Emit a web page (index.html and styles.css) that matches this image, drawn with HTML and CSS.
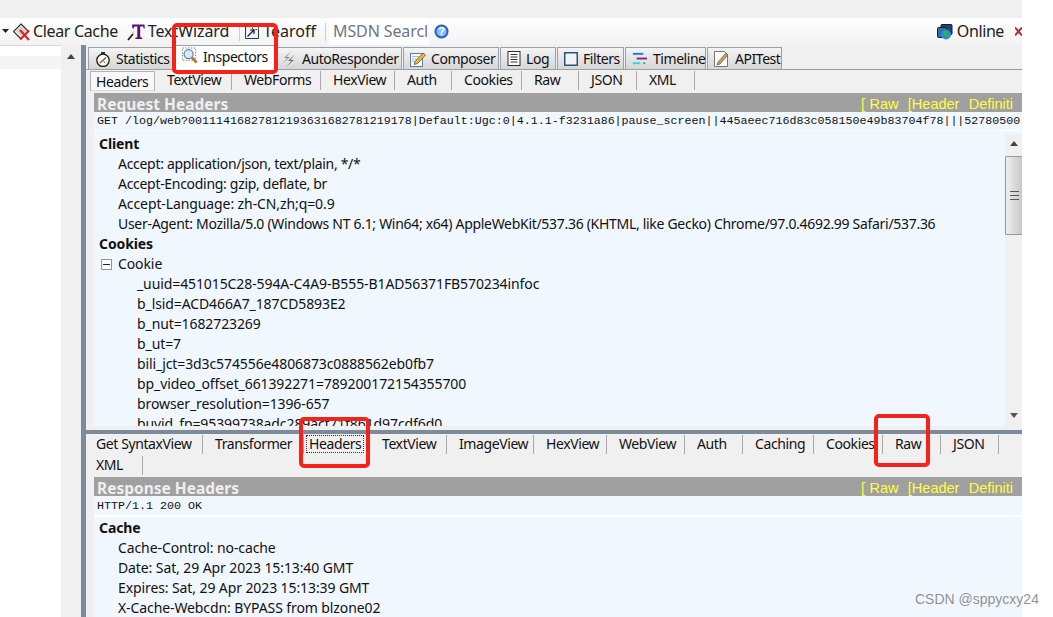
FILE: index.html
```html
<!DOCTYPE html>
<html lang="en">
<head>
<meta charset="utf-8">
<title>Fiddler Inspectors</title>
<link rel="stylesheet" href="styles.css">
</head>
<body>
<div class="app">
  <div class="titlegap"></div>
  <div class="toolbar">
    <svg class="caret" width="8" height="5" viewBox="0 0 8 5"><path d="M0 0h7L3.500 4z" fill="#222"/></svg>
    <span class="tool tool-clear">
      <svg width="18" height="18" viewBox="0 0 18 18"><path d="M8 1l7.500 7.500L8 16 .5 8.500z" fill="#f4f4f4" stroke="#2b2b2b" stroke-width="1.200"/><path d="M8 3l5 5-5 5-5-5z" fill="#cfcfcf"/><path d="M7 7l9 10M16 7.500L7 16.500" stroke="#e0201c" stroke-width="2"/></svg>
      Clear Cache
    </span>
    <span class="tool tool-wizard">
      <svg width="18" height="18" viewBox="0 0 18 18"><path d="M1 17l5-6" stroke="#111" stroke-width="1.600"/><path d="M5.500 10.500l1.500-2" stroke="#e7d23a" stroke-width="1.600"/><path d="M5 1.500h12.500l.3 4h-1L16 3.500h-2.800v10.700l2 .6v1.200H8.300v-1.200l2-.6V3.500H7.500l-1 2h-1z" fill="#5e0f78"/></svg>
      TextWizard
    </span>
    <span class="sep"></span>
    <span class="tool tool-tearoff">
      <svg width="14" height="15" viewBox="0 0 14 15"><path d="M.5 2.500h13v12H.5z" fill="#eef2f7" stroke="#24384f"/><path d="M7.500 .5h6v5h-6z" fill="#fff" stroke="#24384f" stroke-dasharray="1.500 1"/><path d="M2.500 12.500l6-6M5 6h4v4" stroke="#10233a" stroke-width="1.200" fill="none"/></svg>
      Tearoff
    </span>
    <span class="sep sep-msdn"></span>
    <span class="msdn">MSDN Searcl</span>
    <svg class="help" width="15" height="15" viewBox="0 0 15 15"><circle cx="7.500" cy="7.500" r="7" fill="#2660c8"/><circle cx="7.500" cy="7.500" r="5" fill="#8dbcf2"/><text x="7.500" y="11" text-anchor="middle" class="help-q">?</text></svg>
    <span class="grow"></span>
    <span class="tool tool-online">
      <svg width="16" height="16" viewBox="0 0 16 16"><rect x="4" y="0.500" width="11" height="10" rx="1" fill="#1e4570" stroke="#0d1f33"/><rect x="0.500" y="3.500" width="9" height="10" rx="1" fill="#3a6d9e" stroke="#0d1f33"/><circle cx="9" cy="10.500" r="5" fill="#1f8de0"/><path d="M6 8.500l3-2.500 2 2.500-2 5-1.500-2z" fill="#39b23a"/><path d="M11 10.500l2 1-1 2.500z" fill="#39b23a"/></svg>
      Online
    </span>
    <svg class="close" width="7" height="9" viewBox="0 0 7 9"><path d="M0 0.500l7 8M7 0.500l-7 8" stroke="#a33" stroke-width="2"/></svg>
  </div>
  <div class="workspace">
    <aside class="sessions">
      <div class="sessions-head"></div>
    </aside>
    <div class="sess-scroll"><span class="arrow-up"></span></div>
    <div class="vsplit"></div>
    <main class="detail">
      <nav class="maintabs">
        <div class="mtab">
          <svg width="16" height="16" viewBox="0 0 16 16"><path d="M6 1h4v2H6z" fill="#333"/><circle cx="8" cy="9.300" r="6.200" fill="#fffdf0" stroke="#1c1c1c" stroke-width="1.300"/><path d="M8 9.300l3-3" stroke="#1a4fb0" stroke-width="1.200"/><path d="M8 9.300L4.800 12" stroke="#d9302a" stroke-width="1.200"/><path d="M8 9.300l2.500 3" stroke="#28a84a"/></svg>
          Statistics
        </div>
        <div class="mtab mtab-active">
          <svg width="16" height="18" viewBox="0 0 17 18"><rect x=".5" y=".5" width="14" height="13" fill="none" stroke="#6b7a90" stroke-dasharray="1.500 1.500"/><circle cx="7" cy="7" r="4.800" fill="#d6e8fa" stroke="#6f8296" stroke-width="1.300"/><path d="M10.500 10.500l5 5.500" stroke="#b87a2c" stroke-width="3"/></svg>
          Inspectors
        </div>
        <div class="mtab mtab-auto">
          <svg width="16" height="16" viewBox="0 0 16 16"><path d="M10 0L3 7h3.500L1 13l8-7H5.500z" fill="#8f8f8f"/><path d="M14 3L7 10h3.500L5 16l8-7H9.500z" fill="#6f6f6f"/></svg>
          AutoResponder
        </div>
        <div class="mtab">
          <svg width="16" height="16" viewBox="0 0 16 16"><rect x=".5" y="2.500" width="12" height="13" fill="#f4f9ff" stroke="#5b7ea6"/><path d="M2 5.500h7M2 8h5M2 10.500h3" stroke="#a9bcd2"/><path d="M5 10.500L13 2l2.500 2-8 8.500-3.200 1z" fill="#eab83a" stroke="#6a4f18" stroke-width=".8"/></svg>
          Composer
        </div>
        <div class="mtab">
          <svg width="14" height="15" viewBox="0 0 13 15"><rect x=".5" y=".5" width="12" height="14" fill="#fff" stroke="#2a2a2a"/><path d="M3 3.500h7M3 6h7M3 8.500h7M3 11h7" stroke="#333"/></svg>
          Log
        </div>
        <div class="mtab">
          <svg width="14" height="14" viewBox="0 0 14 14"><rect x=".75" y=".75" width="12.500" height="12.500" fill="#f2f4f4" stroke="#23547f" stroke-width="1.500"/></svg>
          Filters
        </div>
        <div class="mtab">
          <svg width="16" height="14" viewBox="0 0 17 14"><path d="M1 1.500h11" stroke="#1a7ae0" stroke-width="2"/><path d="M5 6.500h11" stroke="#8a1a9a" stroke-width="2"/><path d="M1 11.500h8" stroke="#10e0e8" stroke-width="2"/><path d="M12 11.500h2" stroke="#2bb52b" stroke-width="2"/></svg>
          Timeline
        </div>
        <div class="mtab">
          <svg width="16" height="17" viewBox="0 0 16 17"><path d="M.5 1.500h10l3 3v12H.5z" fill="#fff" stroke="#777"/><path d="M4 12l8-9 2 2-8 9-3 1z" fill="#c9a14a" stroke="#555" stroke-width=".7"/></svg>
          APITest
        </div>
      </nav>

      <section class="pane pane-request">
        <div class="subtabs subtabs-req">
          <div class="stab stab-selected">Headers</div>
          <div class="stab">TextView</div>
          <div class="stab">WebForms</div>
          <div class="stab">HexView</div>
          <div class="stab">Auth</div>
          <div class="stab">Cookies</div>
          <div class="stab">Raw</div>
          <div class="stab">JSON</div>
          <div class="stab">XML</div>
        </div>
        <div class="sectionbar">
          <span class="sectiontitle">Request Headers</span>
          <span class="sectionlinks">[ Raw&nbsp; [Header&nbsp; Definiti</span>
        </div>
        <div class="startline">GET /log/web?00111416827812193631682781219178|Default:Ugc:0|4.1.1-f3231a86|pause_screen||445aeec716d83c058150e49b83704f78|||52780500</div>
        <div class="treewrap">
          <div class="tree">
            <div class="group">Client</div>
            <div class="leaf leaf-tight">Accept: application/json, text/plain, */*</div>
            <div class="leaf leaf-tight">Accept-Encoding: gzip, deflate, br</div>
            <div class="leaf">Accept-Language: zh-CN,zh;q=0.9</div>
            <div class="leaf leaf-tight">User-Agent: Mozilla/5.0 (Windows NT 6.1; Win64; x64) AppleWebKit/537.36 (KHTML, like Gecko) Chrome/97.0.4692.99 Safari/537.36</div>
            <div class="group">Cookies</div>
            <div class="leaf leaf-node"><span class="minus"></span>Cookie</div>
            <div class="leaf leaf2">_uuid=451015C28-594A-C4A9-B555-B1AD56371FB570234infoc</div>
            <div class="leaf leaf2">b_lsid=ACD466A7_187CD5893E2</div>
            <div class="leaf leaf2">b_nut=1682723269</div>
            <div class="leaf leaf2">b_ut=7</div>
            <div class="leaf leaf2">bili_jct=3d3c574556e4806873c0888562eb0fb7</div>
            <div class="leaf leaf2">bp_video_offset_661392271=789200172154355700</div>
            <div class="leaf leaf2">browser_resolution=1396-657</div>
            <div class="leaf leaf2">buvid_fp=95399738adc289acf71f861d97cdf6d0</div>
          </div>
          <div class="vscroll">
            <span class="arrow-up"></span>
            <div class="thumb"><span class="grip"></span></div>
            <span class="grow"></span>
            <span class="arrow-down"></span>
          </div>
        </div>
      </section>

      <div class="hsplit"></div>

      <section class="pane pane-response">
        <div class="subtabs subtabs-res">
          <div class="stab stab-first">Get SyntaxView</div>
          <div class="stab">Transformer</div>
          <div class="stab stab-focus"><span class="focus">Headers</span></div>
          <div class="stab">TextView</div>
          <div class="stab">ImageView</div>
          <div class="stab">HexView</div>
          <div class="stab">WebView</div>
          <div class="stab">Auth</div>
          <div class="stab">Caching</div>
          <div class="stab">Cookies</div>
          <div class="stab">Raw</div>
          <div class="stab">JSON</div>
          <div class="stab stab-first stab-xml">XML</div>
        </div>
        <div class="sectionbar">
          <span class="sectiontitle">Response Headers</span>
          <span class="sectionlinks">[ Raw&nbsp; [Header&nbsp; Definiti</span>
        </div>
        <div class="startline startline-res">HTTP/1.1 200 OK</div>
        <div class="tree tree-res">
          <div class="group">Cache</div>
          <div class="leaf">Cache-Control: no-cache</div>
          <div class="leaf">Date: Sat, 29 Apr 2023 15:13:40 GMT</div>
          <div class="leaf">Expires: Sat, 29 Apr 2023 15:13:39 GMT</div>
          <div class="leaf">X-Cache-Webcdn: BYPASS from blzone02</div>
        </div>
      </section>
    </main>
  </div>
</div>
<div class="mark mark-inspectors"></div>
<div class="mark mark-headers"></div>
<div class="mark mark-raw"></div>
<div class="watermark">CSDN @sppycxy24</div>
</body>
</html>
```
FILE: styles.css
```css
* { box-sizing: border-box; }
html, body { margin: 0; height: 100%; background: #fff; overflow: hidden; }
body { position: relative; font-family: "Noto Sans", "Open Sans", sans-serif; font-size: 14px; color: #111; }
.app { width: 1022px; height: 617px; display: flex; flex-direction: column; background: #f0f0f0; }
.titlegap { height: 18px; background: #f0f0f0; }

.toolbar { height: 27px; display: flex; align-items: center; background: linear-gradient(#fefefe, #f3f3f3); font-size: 16px; line-height: 25px; color: #222; white-space: nowrap; overflow: hidden; }
.caret { margin-left: 2px; margin-right: 3px; flex: none; }
.tool { display: inline-flex; align-items: center; gap: 2px; }
.tool-clear { letter-spacing: -.35px; }
.tool-wizard { margin-left: 9px; gap: 3px; letter-spacing: -.1px; }
.tool-tearoff { gap: 4px; }
.sep { width: 1px; height: 18px; background: #ccc; margin: 0 5px 0 10px; }
.sep-msdn { margin: 0 3px 0 9px; }
.msdn { background: #fff; color: #6d7680; width: 100px; height: 27px; line-height: 26px; padding-left: 4px; overflow: hidden; letter-spacing: -.1px; }
.help { margin-left: 5px; }
.help-q { font-size: 11px; font-weight: 700; fill: #fff; font-family: "Liberation Sans", sans-serif; }
.grow { flex: 1; }
.tool-online { gap: 4px; letter-spacing: -.4px; }
.close { margin-left: 11px; flex: none; }

.workspace { flex: 1; display: flex; min-height: 0; }
.sessions { width: 61px; background: #fff; padding-top: 10px; border-top: 1px solid #d8d8d8; }
.sessions-head { height: 13px; background: #f5f5f5; }
.sess-scroll { width: 20px; background: #f0f0f0; display: flex; justify-content: center; padding-top: 9px; }
.arrow-up { display: block; width: 0; height: 0; border-left: 4px solid transparent; border-right: 4px solid transparent; border-bottom: 5px solid #444; }
.arrow-down { display: block; width: 0; height: 0; border-left: 4px solid transparent; border-right: 4px solid transparent; border-top: 5px solid #555; }
.vsplit { width: 5px; background: #7c8b9c; }
.detail { flex: 1; min-width: 0; display: flex; flex-direction: column; }

.maintabs { height: 25px; display: grid; grid-template-columns: 87px 102px 126px 97px 57px 68px 82px 76px; padding-left: 2px; border-bottom: 1px solid #98a0a8; align-items: end; }
.mtab { height: 22px; margin-right: 1px; padding-left: 6px; display: flex; align-items: center; gap: 5px; border: 1px solid #98a0a8; border-bottom: 0; background: linear-gradient(#f4f4f4, #d6d6d6); white-space: nowrap; letter-spacing: -.45px; }
.mtab svg { flex: none; }
.mtab-active { height: 25px; background: #fff; margin-bottom: -1px; border-bottom: 1px solid #fff; padding-bottom: 3px; }
.mtab-auto { padding-left: 3px; }

.pane-request { height: 360px; display: flex; flex-direction: column; padding-bottom: 4px; }
.subtabs { display: grid; padding-left: 4px; background: #f0f0f0; flex: none; }
.subtabs-req { height: 23px; grid-template-columns: 65px 77px 89px 74px 57px 70px 57px 58px 58px; padding-top: 1px; }
.subtabs-res { height: 43px; grid-template-columns: 113px 101px 66px 77px 87px 73px 78px 58px 71px 69px 58px 58px; grid-auto-rows: 21px; padding-top: 1px; }
.stab { height: 19px; line-height: 18px; padding-left: 12px; border-right: 1px solid #a8a8a8; white-space: nowrap; letter-spacing: -.4px; }
.stab-selected { height: 20px; padding-left: 5px; line-height: 19px; background: #f8f8f8; border: 1px solid #b4b4b4; border-bottom-color: #ddd; }
.stab-first { padding-left: 6px; }
.stab-xml { width: 53px; }
.stab-focus { padding-left: 2px; }
.focus { display: inline-block; height: 18px; padding: 0 3px; outline: 1px dotted #333; outline-offset: -1px; }

.sectionbar { height: 19px; background: #a0a0a0; margin-left: 8px; display: flex; justify-content: space-between; overflow: hidden; flex: none; }
.sectiontitle { font-weight: 700; font-size: 15.500px; line-height: 22px; color: #efefef; padding-left: 3px; letter-spacing: 0; }
.sectionlinks { font-family: "Liberation Sans", sans-serif; font-size: 14.500px; line-height: 22px; color: #ffff3c; padding-right: 9px; white-space: pre; word-spacing: .6px; }
.startline { height: 19px; margin-left: 8px; background: #f0f7ff; font-family: "Liberation Mono", monospace; font-size: 11.670px; line-height: 19px; padding-left: 3px; white-space: nowrap; overflow: hidden; flex: none; border-bottom: 1px solid #fff; }
.startline-res { height: 21px; line-height: 20px; border-bottom: 2px solid #fff; }

.treewrap { flex: 1; min-height: 0; display: flex; margin-left: 8px; padding-top: 3px; overflow: hidden; background: #f0f7ff; }
.tree { flex: 1; min-width: 0; overflow: hidden; }
.group { height: 20px; line-height: 20px; font-weight: 700; padding-left: 5px; white-space: nowrap; letter-spacing: -.1px; }
.leaf { height: 20px; line-height: 20px; padding-left: 24px; white-space: nowrap; letter-spacing: -.1px; }
.leaf-tight { letter-spacing: -.3px; }
.leaf-node { display: flex; align-items: center; }
.leaf2 { padding-left: 43px; }
.minus { width: 11px; height: 11px; margin-left: -17px; margin-right: 6px; border: 1px solid #8a98a8; background: #fff; position: relative; }
.minus::after { content: ""; position: absolute; left: 1px; right: 1px; top: 4px; height: 1px; background: #223; }
.vscroll { width: 17px; background: #f0f0f0; display: flex; flex-direction: column; align-items: center; padding: 7px 0 8px; }
.thumb { width: 17px; height: 79px; margin-top: 10px; border: 1px solid #999; border-right: 0; border-radius: 2px 0 0 2px; background: linear-gradient(90deg, #efefef, #c8c8c8); display: flex; align-items: center; justify-content: center; }
.grip { width: 9px; height: 9px; background: repeating-linear-gradient(#555 0 1px, transparent 1px 4px); }

.hsplit { height: 4px; background: #7c8b9c; flex: none; }
.pane-response { flex: 1; min-height: 0; display: flex; flex-direction: column; overflow: hidden; }
.tree-res { flex: 1; margin-left: 8px; padding-top: 1px; background: #f0f7ff; }

.mark { position: absolute; border: 4px solid #f5221a; border-radius: 5px; pointer-events: none; }
.mark-inspectors { left: 172px; top: 23px; width: 106px; height: 51px; }
.mark-headers { left: 299px; top: 417px; width: 71px; height: 51px; }
.mark-raw { left: 874px; top: 414px; width: 56px; height: 53px; }
.watermark { position: absolute; left: 915px; top: 591px; font-family: "Liberation Sans", sans-serif; font-size: 14px; color: rgba(110, 110, 110, .75); white-space: nowrap; }
```
